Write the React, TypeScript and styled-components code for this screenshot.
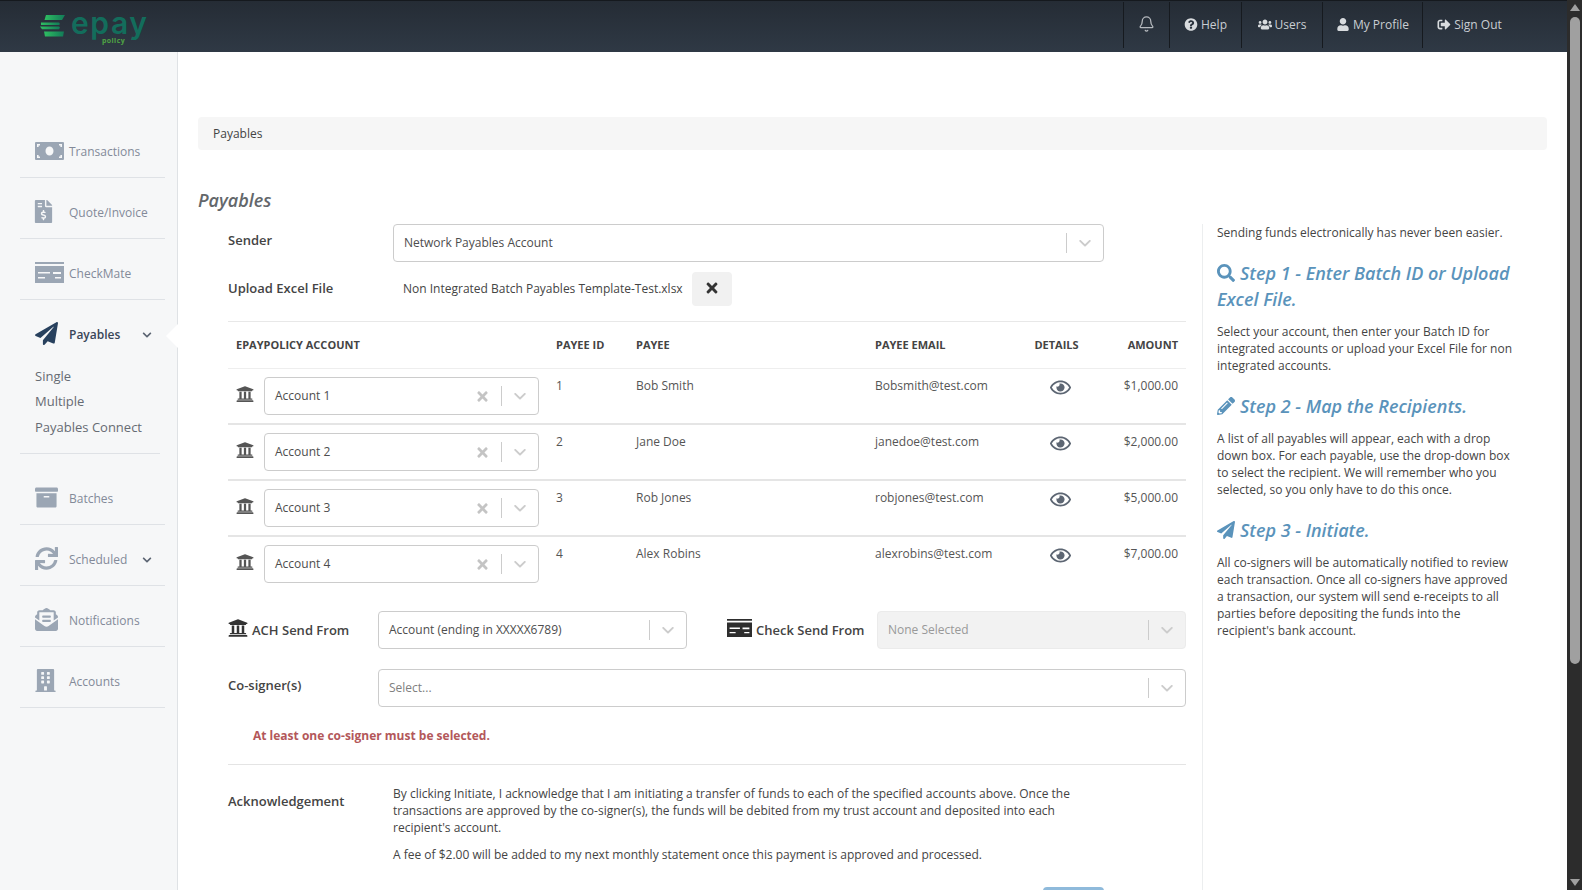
import React from "react";
import styled, { createGlobalStyle } from "styled-components";
import { Bell } from "lucide-react";
import {
  FaQuestionCircle, FaUsers, FaUser, FaSignOutAlt, FaUniversity, FaRegEye, FaTimes,
  FaSearch, FaPencilAlt, FaPaperPlane, FaFileInvoiceDollar, FaArchive, FaSync, FaEnvelopeOpenText, FaBuilding, FaChevronDown,
} from "react-icons/fa";

const Global = createGlobalStyle`
  html, body { margin: 0; padding: 0; height: 100%; overflow: hidden; background: #fff; }
  body { font-family: "Open Sans", "Liberation Sans", sans-serif; font-size: 12px; color: #444; }
  * { box-sizing: border-box; }
`;

const Frame = styled.div`display: flex; height: 890px; width: 1582px; overflow: hidden;`;
const Page = styled.div`width: 1567px; display: flex; flex-direction: column; height: 890px; overflow: hidden;`;
const Bar = styled.aside`
  width: 15px; background: #2c2c2c; display: flex; flex-direction: column; align-items: center; padding-top: 4px;
`;
const Arrow = styled.div<{ $down?: boolean }>`
  width: 0; height: 0; border-left: 5px solid transparent; border-right: 5px solid transparent;
  ${p => p.$down ? "border-top: 7px solid #a0a0a0; margin-top: auto; margin-bottom: 4px;" : "border-bottom: 7px solid #a0a0a0;"}
`;
const Thumb = styled.div`width: 10px; height: 647px; margin-top: 6px; background: #a0a0a0; border-radius: 5px;`;

const Header = styled.header`
  height: 52px; flex: none; background: linear-gradient(180deg, #252c35 0%, #2f3945 100%); display: flex; align-items: stretch;
  border-top: 1px solid #15191e; padding-left: 40px;
`;
const Logo = styled.div`display: flex; align-items: flex-start; padding-top: 6px; gap: 6px; position: relative;`;
const LogoText = styled.span`font: 600 30px/26px "Inter", "Open Sans", sans-serif; color: #136d5c; letter-spacing: 1.6px; margin-top: 3px;`;
const LogoSub = styled.span`
  position: absolute; left: 62px; top: 35px; font: 700 7px/9px "Open Sans", sans-serif; color: #4fa444; letter-spacing: .4px;
`;
const Nav = styled.nav`margin-left: auto; display: flex; padding: 1px 51px 4px 0; align-items: stretch;`;
const NavItem = styled.a<{ $w: number }>`
  width: ${p => p.$w}px; border-left: 1px solid #161a1f; display: flex; align-items: center; justify-content: center; gap: 3px;
  color: #c9ced3; font-size: 12px; white-space: nowrap; padding-bottom: 2px;
  svg { color: #d8dbde; width: 14px; height: 13px; }
`;
const BellIcon = styled(Bell)`
  && { width: 17px; height: 18px; color: #b5b9be; }
`;

const Body = styled.div`flex: 1; display: flex; min-height: 0;`;
const Side = styled.aside`
  width: 178px; flex: none; background: #f6f7f8; border-right: 1px solid #dfe2e5; padding: 65px 12px 0 20px; position: relative;
`;
const Notch = styled.div`
  position: absolute; right: -1px; top: 272px; width: 12px; height: 24px; background: #fff;
  clip-path: polygon(100% 0, 0 50%, 100% 100%);
`;
const SideRow = styled.div<{ $active?: boolean; $gap?: boolean }>`
  height: 60px; display: flex; align-items: center; padding: 9px 0 0 15px; color: ${p => p.$active ? "#3a4658" : "#838a99"};
  font-size: 12px; font-weight: ${p => p.$active ? 600 : 400}; position: relative; margin-top: ${p => p.$gap ? 10 : 0}px;
`;
const SideIcon = styled.span<{ $active?: boolean }>`
  width: 34px; display: flex; justify-content: flex-start; font-size: 23px; color: ${p => p.$active ? "#28415e" : "#9ba6b4"}; flex: none;
  svg { transform: translateY(-1px); }
`;
const QuoteIcon = styled(FaFileInvoiceDollar)`margin-left: -3px;`;
const BuildingIcon = styled(FaBuilding)`margin-left: -1px;`;
const Caret = styled(FaChevronDown)`position: absolute; right: 13px; top: 30px; width: 10px; height: 10px; color: #5c6573;`;
const Rule = styled.div<{ $short?: boolean }>`height: 1px; background: #dfe2e6; margin-right: ${p => p.$short ? 5 : 0}px;`;
const SubList = styled.div`padding: 0 0 13px 15px; margin-top: 4px; display: flex; flex-direction: column;`;
const SubItem = styled.a`height: 25.3px; line-height: 25px; font-size: 13px; color: #666b73;`;

const Main = styled.main`flex: 1; padding: 65px 20px 0 20px; min-width: 0;`;
const Crumb = styled.div`height: 33px; background: #f6f6f6; border-radius: 4px; padding: 0 15px; display: flex; align-items: center; color: #444; font-size: 12px;`;
const Title = styled.h2`margin: 37px 0 0; font: italic 600 18px/26px "Open Sans", sans-serif; color: #63676b;`;
const Columns = styled.div`display: flex; margin-top: 11px;`;
const FormCol = styled.div`width: 988px; padding-left: 30px; flex: none;`;
const HelpCol = styled.div`width: 352px; border-left: 1px solid #eceeef; padding: 0 0 0 14px; margin-left: 16px; height: 700px; font-size: 12px; color: #444; line-height: 17px; flex: none;`;
const Row = styled.div`display: flex; align-items: center;`;
const Label = styled.label`font-size: 13px; font-weight: 600; color: #444; white-space: nowrap;`;
const SenderLabel = styled(Label)`width: 165px; flex: none; padding-bottom: 6px;`;
const UploadLabel = styled(Label)`width: 165px; flex: none; padding-bottom: 2px;`;

const Sel = styled.div<{ $w?: number; $off?: boolean; $grow?: boolean }>`
  ${p => p.$w ? `width: ${p.$w}px;` : ""} ${p => p.$grow ? "flex: 1;" : ""} flex-shrink: 0;
  height: 38px; display: flex; align-items: center; border: 1px solid ${p => p.$off ? "#ebebeb" : "#cccccc"}; border-radius: 4px;
  background: ${p => p.$off ? "#f2f2f2" : "#fff"}; padding-left: 10px; font-size: 12px;
  color: ${p => p.$off ? "#999" : "#4d4d4d"};
`;
const SelText = styled.span<{ $ph?: boolean }>`flex: 1; white-space: nowrap; padding-bottom: 2px; color: ${p => p.$ph ? "#808080" : "inherit"};`;
const Clear = styled(FaTimes)`width: 15px; height: 15px; color: #c4c4c4; margin-right: 11px;`;
const Sep = styled.span`width: 1px; height: 20px; background: #ccc;`;
const Chev = styled.span`width: 36px; display: flex; justify-content: center; color: #ccc;`;
const ChevIcon = () => (
  <svg width="20" height="20" viewBox="0 0 20 20" fill="currentColor"><path d="M4.500 7.200c.4-.4 1-.4 1.400 0L10 11.200l4.100-4c.4-.4 1-.4 1.400 0 .4.400.4 1 0 1.400l-4.800 4.700c-.4.400-1 .4-1.400 0L4.500 8.600c-.4-.4-.4-1 0-1.400z"/></svg>
);
const Select = ({ text, w, off, grow, clear, ph }: { text: string; w?: number; off?: boolean; grow?: boolean; clear?: boolean; ph?: boolean }) => (
  <Sel $w={w} $off={off} $grow={grow}>
    <SelText $ph={ph}>{text}</SelText>
    {clear && <Clear />}
    <Sep />
    <Chev><ChevIcon /></Chev>
  </Sel>
);

const UploadRow = styled(Row)`margin-top: 10px; height: 34px;`;
const FileName = styled.span`margin-left: 10px; padding-bottom: 2px; font-size: 12px; color: #444; white-space: nowrap;`;
const XBtn = styled.button`
  margin-left: 9px; width: 40px; height: 34px; border: 0; border-radius: 4px; background: #f1f1f1; display: flex; align-items: center; justify-content: center; color: #333; padding: 0 0 2px;
  svg { width: 16px; height: 16px; }
`;

const Table = styled.div`margin-top: 15px; border-top: 1px solid #e8e8e8;`;
const Grid = styled.div`display: grid; grid-template-columns: 320px 80px 239px 150px 63px 1fr;`;
const Thead = styled(Grid)`height: 47px; align-items: center; border-bottom: 1px solid #eeeeee; padding: 0 8px 2px;`;
const Th = styled.div<{ $r?: boolean; $c?: boolean }>`
  font-size: 11px; font-weight: 700; color: #444; text-transform: uppercase; text-align: ${p => p.$r ? "right" : p.$c ? "center" : "left"}; white-space: nowrap;
`;
const Tr = styled(Grid)<{ $last?: boolean }>`
  height: 56px; padding: 0 8px; border-bottom: ${p => p.$last ? "0" : "2px solid #e5e5e5"};
`;
const Td = styled.div<{ $r?: boolean }>`padding-top: 8px; font-size: 12px; color: #555; text-align: ${p => p.$r ? "right" : "left"}; white-space: nowrap;`;
const AcctCell = styled.div`display: flex; align-items: flex-start; padding-top: 8px; gap: 10px;`;
const BankIcon = styled(FaUniversity)`width: 18px; height: 18px; color: #555; margin-top: 8px; flex: none;`;
const EyeWrap = styled.div`display: flex; justify-content: center; padding-top: 8px; padding-left: 8px; color: #5d6673; svg { width: 21px; height: 21px; }`;

const SendRow = styled(Row)`margin-top: 18px;`;
const IconLabel = styled(Label)`display: flex; align-items: flex-end; gap: 4px; line-height: 18px;`;
const AchLabel = styled(IconLabel)`width: 150px; flex: none; padding-bottom: 2px; svg { width: 20px; height: 20px; color: #333; transform: translateY(-1px); }`;
const CheckLabel = styled(IconLabel)`margin-left: 40px; width: 150px; flex: none; svg { color: #2e2e2e; transform: translateY(-2px); }`;
const CoRow = styled(Row)`margin-top: 20px;`;
const CoLabel = styled(Label)`width: 150px; flex: none; padding-bottom: 6px;`;
const ErrorMsg = styled.div`margin: 20px 0 0 25px; font-size: 12px; font-weight: 700; color: #b3575a;`;
const Hr = styled.div`margin-top: 20px; height: 1px; background: #e4e4e4;`;
const AckRow = styled.div`display: flex; margin-top: 21px;`;
const AckLabel = styled(Label)`width: 165px; flex: none; margin-top: 6px;`;
const AckBody = styled.div`width: 700px; font-size: 12px; line-height: 16.9px; color: #444;`;
const AckP = styled.p`margin: 0 0 10px;`;
const Submit = styled.button`
  display: block; margin: 13px 82px 0 auto; width: 61px; height: 30px; border: 0; border-radius: 4px; background: #8fbadb;
`;

const Help = styled.p`margin: 0; max-width: 299px;`;
const StepHead = styled.h3`margin: 19px 0 11px; font: italic 600 18px/26px "Open Sans", sans-serif; color: #5a93bb;
  svg { width: 18px; height: 18px; vertical-align: -2px; margin-right: 5px; }`;

const CheckIcon = ({ size = 29 }: { size?: number }) => (
  <svg width={size} height={size * 21 / 29} viewBox="0 0 29 21" fill="currentColor">
    <rect x="0" y="0" width="29" height="2" />
    <path fillRule="evenodd" d="M0 4h29v17H0zM3 10v1.500h12V10zM18 10v2h8v-2zM3 15v1.500h7V15zM20 15v1.500h6V15z" />
  </svg>
);
const MoneyIcon = () => (
  <svg width="29" height="18" viewBox="0 0 29 18" fill="currentColor">
    <path fillRule="evenodd" d="M1 0h27a1 1 0 0 1 1 1v16a1 1 0 0 1-1 1H1a1 1 0 0 1-1-1V1a1 1 0 0 1 1-1zm13.500 4.500a4 4.500 0 1 0 0 9 4 4.500 0 0 0 0-9zM2 2v3h1.600V3.500H5V2zm25 0h-3v1.500h1.400V5H27zM2 16h3v-1.500H3.600V13H2zm25 0v-3h-1.600v1.500H24V16z" />
  </svg>
);
const MarkSvg = styled.svg`margin-top: 8px; flex: none;`;
const LogoMark = () => (
  <MarkSvg width="25" height="22" viewBox="0 0 25 22">
    <defs><linearGradient id="lg" x1="0" x2="1"><stop offset="0" stopColor="#2fbf62"/><stop offset="1" stopColor="#127a58"/></linearGradient></defs>
    <g fill="url(#lg)">
      <path d="M6 0h19l-3 5H4.500z"/>
      <path d="M1 7.500h18l1 1.500-1 1H1z"/>
      <path d="M0 11.500h19l1 1-1 1.800H2z"/>
      <path d="M4 16.500h20l-1 5H5z"/>
    </g>
  </MarkSvg>
);

const rows = [
  ["Account 1", "1", "Bob Smith", "Bobsmith@test.com", "$1,000.00"],
  ["Account 2", "2", "Jane Doe", "janedoe@test.com", "$2,000.00"],
  ["Account 3", "3", "Rob Jones", "robjones@test.com", "$5,000.00"],
  ["Account 4", "4", "Alex Robins", "alexrobins@test.com", "$7,000.00"],
];

export default function App() {
  return (
    <Frame>
      <Global />
      <Page>
        <Header>
          <Logo>
            <LogoMark />
            <LogoText>epay</LogoText>
            <LogoSub>policy</LogoSub>
          </Logo>
          <Nav>
            <NavItem $w={46}><BellIcon strokeWidth={1.8} /></NavItem>
            <NavItem $w={72}><FaQuestionCircle />Help</NavItem>
            <NavItem $w={81}><FaUsers />Users</NavItem>
            <NavItem $w={100}><FaUser />My Profile</NavItem>
            <NavItem $w={94}><FaSignOutAlt />Sign Out</NavItem>
          </Nav>
        </Header>
        <Body>
          <Side>
            <Notch />
            <SideRow><SideIcon><MoneyIcon /></SideIcon>Transactions</SideRow><Rule />
            <SideRow><SideIcon><QuoteIcon /></SideIcon>Quote/Invoice</SideRow><Rule />
            <SideRow><SideIcon><CheckIcon /></SideIcon>CheckMate</SideRow><Rule />
            <SideRow $active><SideIcon $active><FaPaperPlane /></SideIcon>Payables<Caret /></SideRow>
            <SubList>
              <SubItem>Single</SubItem>
              <SubItem>Multiple</SubItem>
              <SubItem>Payables Connect</SubItem>
            </SubList>
            <Rule $short />
            <SideRow $gap><SideIcon><FaArchive /></SideIcon>Batches</SideRow><Rule />
            <SideRow><SideIcon><FaSync /></SideIcon>Scheduled<Caret /></SideRow><Rule />
            <SideRow><SideIcon><FaEnvelopeOpenText /></SideIcon>Notifications</SideRow><Rule />
            <SideRow><SideIcon><BuildingIcon /></SideIcon>Accounts</SideRow><Rule />
          </Side>
          <Main>
            <Crumb>Payables</Crumb>
            <Title>Payables</Title>
            <Columns>
              <FormCol>
                <Row>
                  <SenderLabel>Sender</SenderLabel>
                  <Select text="Network Payables Account" w={711} />
                </Row>
                <UploadRow>
                  <UploadLabel>Upload Excel File</UploadLabel>
                  <FileName>Non Integrated Batch Payables Template-Test.xlsx</FileName>
                  <XBtn><FaTimes /></XBtn>
                </UploadRow>
                <Table>
                  <Thead>
                    <Th>EPAYPOLICY ACCOUNT</Th><Th>Payee ID</Th><Th>Payee</Th><Th>Payee Email</Th><Th $c>Details</Th><Th $r>Amount</Th>
                  </Thead>
                  {rows.map((r, i) => (
                    <Tr key={r[0]} $last={i === 3}>
                      <AcctCell>
                        <BankIcon />
                        <Select text={r[0]} w={275} clear />
                      </AcctCell>
                      <Td>{r[1]}</Td><Td>{r[2]}</Td><Td>{r[3]}</Td>
                      <EyeWrap><FaRegEye /></EyeWrap>
                      <Td $r>{r[4]}</Td>
                    </Tr>
                  ))}
                </Table>
                <SendRow>
                  <AchLabel><FaUniversity />ACH Send From</AchLabel>
                  <Select text="Account (ending in XXXXX6789)" w={309} />
                  <CheckLabel><CheckIcon size={25} />Check Send From</CheckLabel>
                  <Select text="None Selected" w={309} off />
                </SendRow>
                <CoRow>
                  <CoLabel>Co-signer(s)</CoLabel>
                  <Select text="Select..." grow ph />
                </CoRow>
                <ErrorMsg>At least one co-signer must be selected.</ErrorMsg>
                <Hr />
                <AckRow>
                  <AckLabel>Acknowledgement</AckLabel>
                  <AckBody>
                    <AckP>By clicking Initiate, I acknowledge that I am initiating a transfer of funds to each of the specified accounts above. Once the transactions are approved by the co-signer(s), the funds will be debited from my trust account and deposited into each recipient's account.</AckP>
                    <AckP>A fee of $2.00 will be added to my next monthly statement once this payment is approved and processed.</AckP>
                  </AckBody>
                </AckRow>
                <Submit aria-label="Initiate" />
              </FormCol>
              <HelpCol>
                <Help>Sending funds electronically has never been easier.</Help>
                <StepHead><FaSearch />Step 1 - Enter Batch ID or Upload Excel File.</StepHead>
                <Help>Select your account, then enter your Batch ID for integrated accounts or upload your Excel File for non integrated accounts.</Help>
                <StepHead><FaPencilAlt />Step 2 - Map the Recipients.</StepHead>
                <Help>A list of all payables will appear, each with a drop down box. For each payable, use the drop-down box to select the recipient. We will remember who you selected, so you only have to do this once.</Help>
                <StepHead><FaPaperPlane />Step 3 - Initiate.</StepHead>
                <Help>All co-signers will be automatically notified to review each transaction. Once all co-signers have approved a transaction, our system will send e-receipts to all parties before depositing the funds into the recipient's bank account.</Help>
              </HelpCol>
            </Columns>
          </Main>
        </Body>
      </Page>
      <Bar><Arrow /><Thumb /><Arrow $down /></Bar>
    </Frame>
  );
}
